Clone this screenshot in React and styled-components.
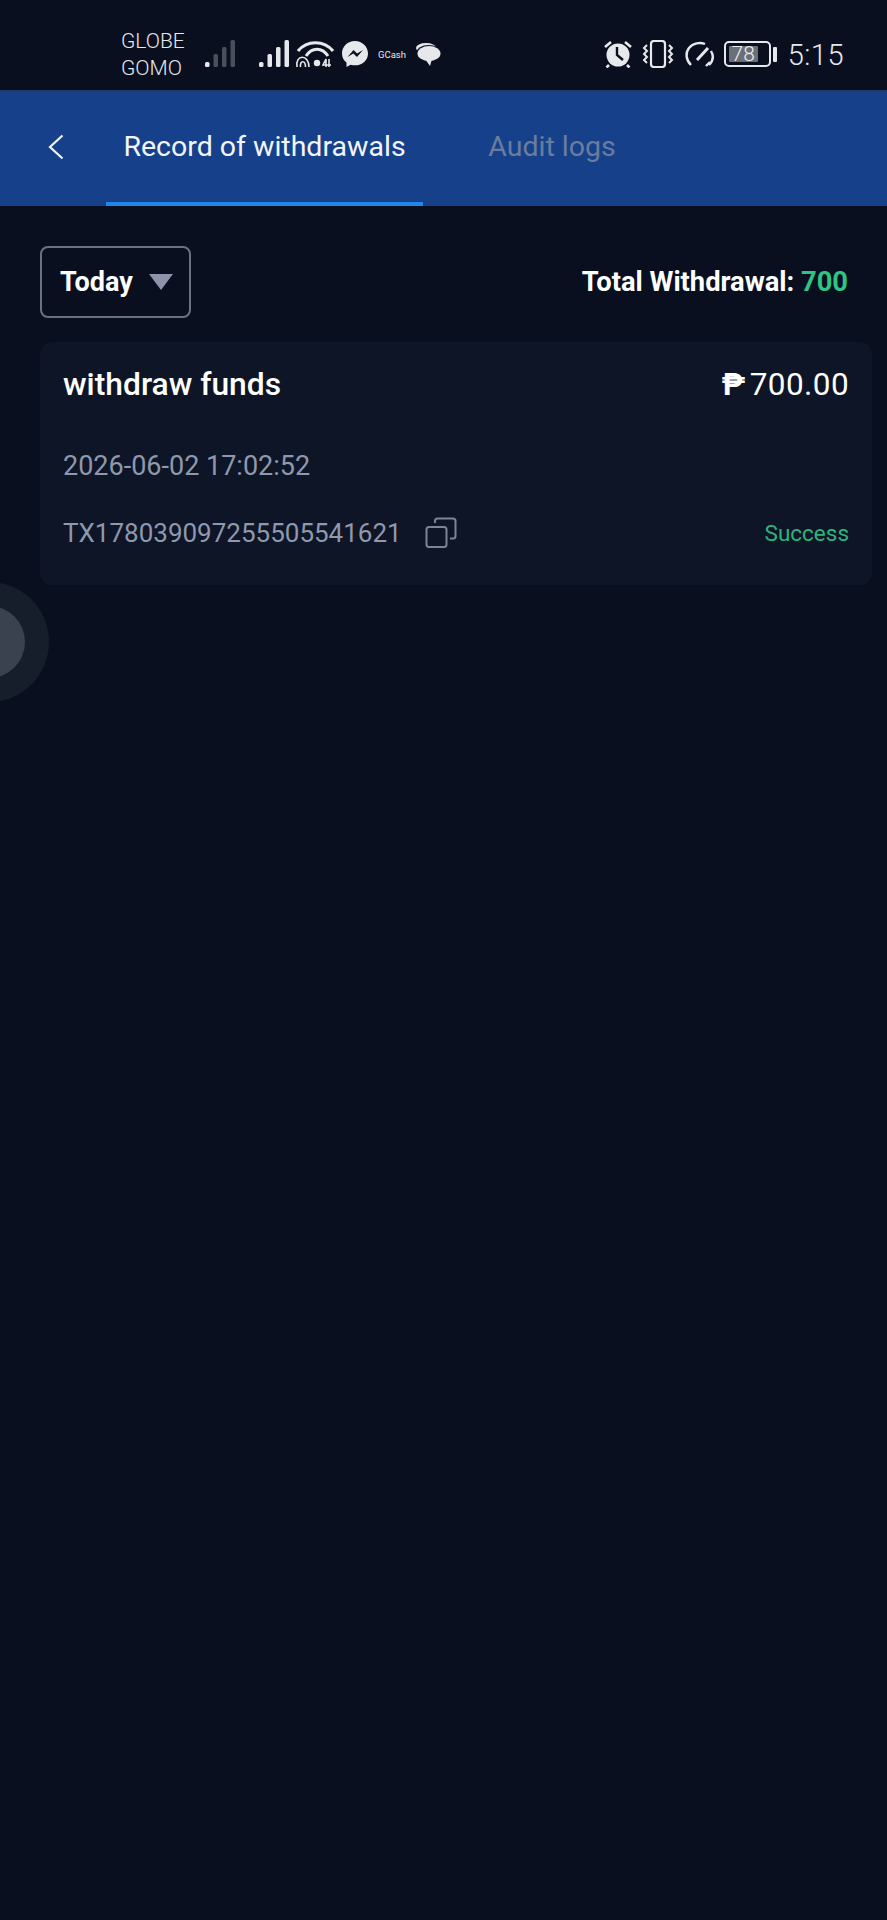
import styled, { createGlobalStyle } from "styled-components";

const GlobalStyle = createGlobalStyle`
  html, body {
    margin: 0;
    padding: 0;
    background: #090f1f;
  }
  * {
    box-sizing: border-box;
  }
`;

const Page = styled.div`
  position: relative;
  width: 887px;
  height: 1920px;
  overflow: hidden;
  background: #090f1f;
  font-family: Roboto, "Liberation Sans", sans-serif;
`;

const StatusBar = styled.div`
  display: flex;
  align-items: center;
  justify-content: space-between;
  height: 90px;
  padding: 18px 43px 0 121px;
  color: #e6e8ec;
`;

const StatusGroup = styled.div`
  display: flex;
  align-items: center;
`;

const Carrier = styled.div`
  width: 84px;
  font-size: 21px;
  line-height: 27px;
  font-weight: 300;
  margin-top: 2px;
`;

const StatusIcon = styled.svg`
  display: block;
  margin-left: ${(p) => p.$gap || 0}px;
  flex: none;
`;

const GCash = styled.span`
  width: 28px;
  margin-left: 10px;
  font-size: 9.5px;
  white-space: nowrap;
`;

const Clock = styled.span`
  margin-left: 11px;
  margin-top: 2px;
  font-size: 29px;
  font-weight: 300;
  letter-spacing: 0.5px;
`;

const Battery = styled.div`
  display: flex;
  align-items: center;
  margin-left: 9px;
`;

const BatteryBody = styled.div`
  width: 47px;
  height: 26px;
  border: 2px solid #e6e8ec;
  border-radius: 5px;
  padding: 3px;
  display: flex;
`;

const BatteryLevel = styled.div`
  flex: 1;
  margin-right: 8px;
  background: #6b6f78;
  border-radius: 1px;
  color: #eceef1;
  font-size: 21px;
  font-weight: 300;
  line-height: 16px;
  text-align: center;
  white-space: nowrap;
`;

const BatteryNub = styled.div`
  width: 4px;
  height: 15px;
  margin-left: 2px;
  background: #e6e8ec;
  border-radius: 1px;
`;

const Header = styled.div`
  display: flex;
  align-items: stretch;
  height: 116px;
  padding-left: 48px;
  background: #16418a;
  border-top: 2px solid #233a66;
`;

const BackButton = styled.div`
  display: flex;
  align-items: center;
  width: 58px;
  flex: none;
  padding-bottom: 4px;
`;

const Tab = styled.div`
  display: flex;
  align-items: center;
  justify-content: center;
  width: ${(p) => p.$width}px;
  padding-bottom: 1px;
  font-size: 28.5px;
  color: ${(p) => (p.$active ? "#f2f5fa" : "#6a7d9f")};
  border-bottom: 4px solid ${(p) => (p.$active ? "#1f87e8" : "transparent")};
`;

const Content = styled.div`
  padding: 40px 15px 0 40px;
`;

const Toolbar = styled.div`
  display: flex;
  align-items: center;
  justify-content: space-between;
  height: 72px;
  padding-right: 24px;
`;

const Picker = styled.div`
  display: flex;
  align-items: center;
  width: 151px;
  height: 72px;
  padding-left: 18px;
  border: 2px solid #6b7180;
  border-radius: 8px;
  color: #fff;
  font-size: 27px;
  font-weight: 700;
`;

const PickerArrow = styled.span`
  width: 0;
  height: 0;
  margin-left: 16px;
  border-left: 12px solid transparent;
  border-right: 12px solid transparent;
  border-top: 16px solid #8c93ab;
`;

const Total = styled.div`
  color: #fff;
  font-size: 27.3px;
  font-weight: 700;
`;

const Green = styled.span`
  color: #2fc384;
`;

const Card = styled.div`
  margin-top: 24px;
  height: 243px;
  padding: 23px 23px 0;
  background: #0e1526;
  border-radius: 12px;
`;

const Row = styled.div`
  display: flex;
  align-items: center;
  justify-content: space-between;
  height: ${(p) => p.$height}px;
  margin-top: ${(p) => p.$top || 0}px;
`;

const Title = styled.div`
  color: #fff;
  font-size: 31.8px;
  font-weight: 500;
`;

const Amount = styled.div`
  color: #fff;
  font-size: 31.5px;
  letter-spacing: 0.4px;
`;

const Peso = styled.span`
  margin-right: 4px;
  font-weight: 700;
`;

const Muted = styled.div`
  display: flex;
  align-items: center;
  color: #8f98ad;
  font-size: ${(p) => p.$size}px;
`;

const Status = styled.div`
  color: #2fb37c;
  font-size: 22.5px;
`;

const CopyIcon = styled.svg`
  display: block;
  margin-left: 23px;
`;

const FloatBall = styled.div`
  position: absolute;
  left: -71px;
  top: 582px;
  width: 120px;
  height: 120px;
  display: flex;
  align-items: center;
  justify-content: center;
  border-radius: 50%;
  background: #161d2b;
`;

const FloatDot = styled.div`
  width: 72px;
  height: 72px;
  border-radius: 50%;
  background: #3a4250;
`;

const Bars = ({ dim, gap }) => (
  <StatusIcon $gap={gap} width="30" height="28" viewBox="0 0 30 28">
    {[0, 1, 2, 3].map((i) => (
      <rect
        key={i}
        x={i * 8.5}
        y={[22, 14, 7, 0][i]}
        width="4.5"
        height={[5, 13, 20, 27][i]}
        rx="1.5"
        fill={dim && i > 0 ? "#4a4f5c" : "#e6e8ec"}
      />
    ))}
  </StatusIcon>
);

const App = () => {
  return (
    <Page>
      <GlobalStyle />
      <StatusBar>
        <StatusGroup>
          <Carrier>
            GLOBE
            <br />
            GOMO
          </Carrier>
          <Bars dim />
          <Bars gap={24} />
          <StatusIcon $gap={6} width="40" height="28" viewBox="0 0 40 28" fill="none" stroke="#e6e8ec">
            <path d="M3 11C12 0 29 0 38 11" strokeWidth="3.2" />
            <path d="M11 16C17 7 27 7 33 16" strokeWidth="3" />
            <circle cx="22" cy="23" r="3.2" fill="#e6e8ec" stroke="none" />
            <path d="M2 27C0 14 14 14 14 27" strokeWidth="1.6" />
            <path d="M5.5 27C4.5 20 10.5 20 10.5 27" strokeWidth="1.6" />
            <path d="M31 27V19L28 25H36M34 19V27" strokeWidth="1.6" />
          </StatusIcon>
          <StatusIcon $gap={7} width="26" height="26" viewBox="0 0 26 26">
            <path d="M13 0C5.8 0 0 5.4 0 12.4c0 3.8 1.7 7 4.5 9.2V26l4.1-2.3c1.4.4 2.9.6 4.4.6 7.2 0 13-5.2 13-11.9S20.2 0 13 0z" fill="#e6e8ec" />
            <path d="M5.5 16l6-7 3.6 3.4L21 9l-6 7-3.6-3.4z" fill="#0a0f1e" />
          </StatusIcon>
          <GCash>GCash</GCash>
          <StatusIcon $gap={9} width="26" height="24" viewBox="0 0 26 24">
            <ellipse cx="11" cy="6" rx="10" ry="5" fill="#e6e8ec" />
            <ellipse cx="13.5" cy="11" rx="12" ry="8" fill="#0a0f1e" />
            <ellipse cx="14" cy="11.5" rx="11.5" ry="7.5" fill="#e6e8ec" />
            <path d="M10 17L15 24L17 17z" fill="#e6e8ec" />
          </StatusIcon>
        </StatusGroup>
        <StatusGroup>
          <StatusIcon width="30" height="28" viewBox="0 0 30 28" fill="none" stroke="#e6e8ec">
            <circle cx="15" cy="15" r="11.5" fill="#e6e8ec" stroke="none" />
            <path d="M14 7V15L20 20" stroke="#0a0f1e" strokeWidth="2.4" />
            <path d="M2 7L8 2M28 7L22 2M6 25L3.5 27.5M24 25L26.5 27.5" strokeWidth="2.6" />
          </StatusIcon>
          <StatusIcon $gap={8} width="34" height="28" viewBox="0 0 34 28" fill="none" stroke="#e6e8ec" strokeWidth="2">
            <rect x="10" y="1" width="14" height="26" rx="3" strokeWidth="2.2" />
            <path d="M6 5L3 8L6 11L3 14L6 17L3 20L6 23M28 5L31 8L28 11L31 14L28 17L31 20L28 23" />
          </StatusIcon>
          <StatusIcon $gap={9} width="31" height="28" viewBox="0 0 31 28" fill="none" stroke="#e6e8ec" strokeWidth="2.4">
            <path d="M7 25C2 20 1 13 5 8 9 3 16 2 21 4" />
            <path d="M27 11C30 16 29 21 25 25" />
            <path d="M13 20L24 8" strokeWidth="3" />
            <path d="M22 26L26 22" />
          </StatusIcon>
          <Battery>
            <BatteryBody>
              <BatteryLevel>78</BatteryLevel>
            </BatteryBody>
            <BatteryNub />
          </Battery>
          <Clock>5:15</Clock>
        </StatusGroup>
      </StatusBar>

      <Header>
        <BackButton>
          <svg width="16" height="26" viewBox="0 0 16 26" fill="none" stroke="#f2f5fa" strokeWidth="2.2">
            <path d="M14.5 1.5L2 13L14.5 24.5" />
          </svg>
        </BackButton>
        <Tab $active $width={317}>Record of withdrawals</Tab>
        <Tab $width={258}>Audit logs</Tab>
      </Header>

      <Content>
        <Toolbar>
          <Picker>
            Today
            <PickerArrow />
          </Picker>
          <Total>
            Total Withdrawal: <Green>700</Green>
          </Total>
        </Toolbar>

        <Card>
          <Row $height={38}>
            <Title>withdraw funds</Title>
            <Amount>
              <Peso>₱</Peso>700.00
            </Amount>
          </Row>
          <Row $height={38} $top={44}>
            <Muted $size={27}>2026-06-02 17:02:52</Muted>
          </Row>
          <Row $height={38} $top={29}>
            <Muted $size={26}>
              TX178039097255505541621
              <CopyIcon width="32" height="32" viewBox="0 0 32 32" fill="none" stroke="#7d8496" strokeWidth="2">
                <rect x="1.5" y="10" width="20" height="20" rx="2.5" />
                <path d="M10 6V4C10 2.5 11 1.500 12.5 1.5H28C29.5 1.5 30.5 2.5 30.5 4V19C30.5 20.5 29.5 21.5 28 21.5H25" />
              </CopyIcon>
            </Muted>
            <Status>Success</Status>
          </Row>
        </Card>
      </Content>

      <FloatBall>
        <FloatDot />
      </FloatBall>
    </Page>
  );
};

export default App;
